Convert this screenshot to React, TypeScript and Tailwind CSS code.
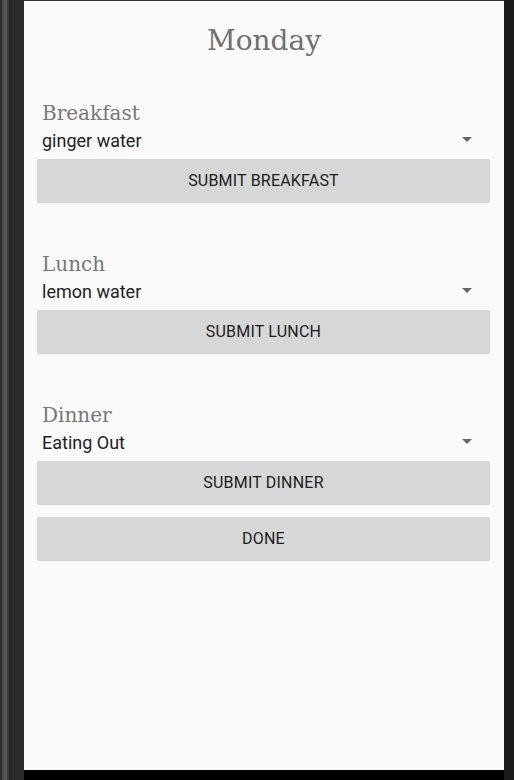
const meals = [
  { label: 'Breakfast', value: 'ginger water', button: 'Submit Breakfast' },
  { label: 'Lunch', value: 'lemon water', button: 'Submit Lunch' },
  { label: 'Dinner', value: 'Eating Out', button: 'Submit Dinner' },
]

const serif = { fontFamily: '"DejaVu Serif", serif' }

function MealSection({ label, value, button, first }: { label: string; value: string; button: string; first?: boolean }) {
  return (
    <section className={first ? 'mt-[43px]' : 'mt-[50px]'}>
      <div className="pl-[18px] text-[20px] leading-[24px] text-[#777777]" style={serif}>
        {label}
      </div>
      <div className="mt-[5px] flex h-[22px] items-center justify-between pl-[18px] pr-[32px]">
        <span className="text-[18px] leading-[22px] text-[#1f1f1f]">{value}</span>
        <span className="-mt-[4px] h-0 w-0 border-x-[5px] border-t-[5px] border-x-transparent border-t-[#666666]" />
      </div>
      <button
        type="button"
        className="mt-[7px] ml-[13px] flex h-[43px] w-[453px] items-center justify-center rounded-[2px] bg-[#d6d7d7] text-[16px] font-normal uppercase tracking-[0.2px] text-[#1c1c1c] shadow-[0_1px_1.5px_rgba(0,0,0,0.18)]"
      >
        {button}
      </button>
    </section>
  )
}

export default function App() {
  return (
    <div
      className="flex h-[780px] w-[514px] overflow-hidden bg-black"
      style={{ fontFamily: 'Roboto, "Liberation Sans", sans-serif' }}
    >
      {/* left bezel */}
      <div className="flex h-full w-[24px]">
        <div className="w-[2px] bg-[#2c2c2c]" />
        <div className="w-[2px] bg-[#4a4a4a]" />
        <div className="w-[3px] bg-[#575757]" />
        <div className="w-[2px] bg-[#3a3a3a]" />
        <div className="w-[2px] bg-[#232323]" />
        <div className="flex-1 bg-[#2a2a2a]" />
      </div>

      <div className="flex w-[480px] flex-col">
        <div className="h-px bg-[#333333]" />
        <main className="h-[769px] bg-[#fafafa]">
          <h1 className="mt-[23px] text-center text-[28px] font-normal leading-[34px] text-[#707070]" style={serif}>
            Monday
          </h1>
          {meals.map((m, i) => (
            <MealSection key={m.label} {...m} first={i === 0} />
          ))}
          <button
            type="button"
            className="mt-[13px] ml-[13px] flex h-[43px] w-[453px] items-center justify-center rounded-[2px] bg-[#d6d7d7] text-[16px] font-normal uppercase tracking-[0.2px] text-[#1c1c1c] shadow-[0_1px_1.5px_rgba(0,0,0,0.18)]"
          >
            Done
          </button>
        </main>
        <div className="h-[10px] bg-black" />
      </div>

      {/* right bezel */}
      <div className="h-full w-[10px] bg-[#1c1c1c]" />
    </div>
  )
}
